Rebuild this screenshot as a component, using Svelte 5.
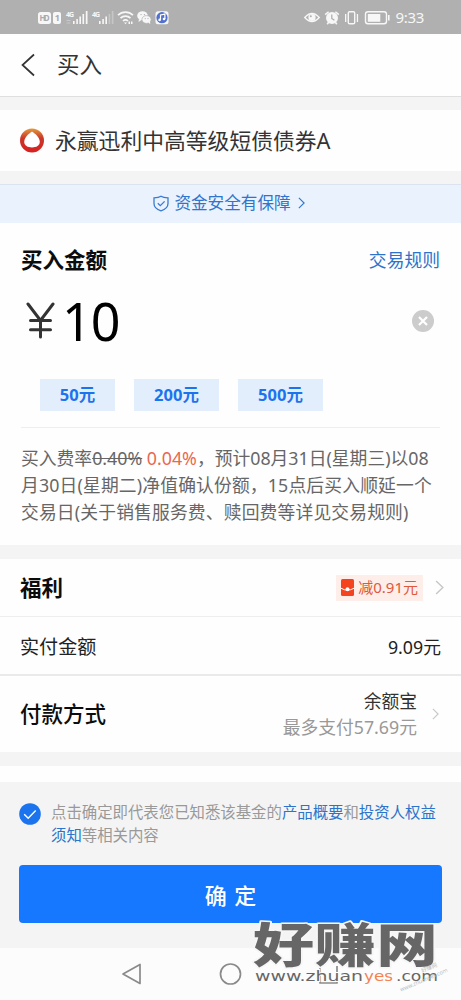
<script>
  let amount = $state('10');
  let agreed = $state(true);

  const presets = [50, 200, 500];
</script>

{#snippet chevron(w, h)}
  <svg class="chevron" width={w} height={h} viewBox="0 0 8 14" preserveAspectRatio="none">
    <path d="M1 1l6 6-6 6" fill="none" stroke="currentColor" stroke-width="1.3" />
  </svg>
{/snippet}

<div class="page">
  <div class="status">
    <svg class="status-left" width="132" height="16" viewBox="0 0 132 16" fill="#f7f7f7">
      <rect x="0" y="3" width="13" height="12" rx="2.5" />
      <text x="1.6" y="12.2" font-size="8" font-weight="700" fill="#aaa" textLength="10">HD</text>
      <rect x="15" y="3" width="8" height="12" rx="2" />
      <text x="16.8" y="12.4" font-size="9" font-weight="700" fill="#aaa">1</text>
      <text x="28" y="7.5" font-size="7" font-weight="700" textLength="8">4G</text>
      <path d="M35 12h1.6v3H35zM38.3 10h1.6v5h-1.6zM41.4 7.5H43V15h-1.6zM44.5 5h1.6v10h-1.6zM47.8 2h1.7v13h-1.7z" />
      <path d="M28.5 11h4v1h-4zM28.5 13.5h4v1h-4z" opacity=".35" />
      <text x="54" y="7.5" font-size="7" font-weight="700" textLength="8">4G</text>
      <path d="M61 12h1.6v3H61zM64.3 10h1.6v5h-1.6zM67.4 7.5H69V15h-1.6z" />
      <path d="M70.6 5h1.6v10h-1.6zM73.8 2h1.7v13h-1.7z" opacity=".3" />
      <g fill="none" stroke="#f7f7f7" stroke-width="1.7">
        <path d="M80 6.2a10.500 10.500 0 0 1 15 0M82.500 9.200a7 7 0 0 1 10 0M85 12a3.600 3.600 0 0 1 5 0" />
      </g>
      <path d="M86 13.500h3l-1.500 1.800zM90.500 12.500h1.500V15h-1.500zM93 12.500h1.500V15H93z" />
      <ellipse cx="104.500" cy="6.800" rx="5.300" ry="4.500" />
      <path d="M101 10l-.5 3 3-2z" />
      <ellipse cx="108.500" cy="10.500" rx="4.600" ry="3.900" stroke="#b0b0b0" stroke-width=".7" />
      <path d="M110 13l2.200 2.300-.2-3z" />
      <g fill="#b0b0b0">
        <circle cx="103" cy="5.600" r=".7" /><circle cx="106.400" cy="5.600" r=".7" />
        <circle cx="107.200" cy="9.600" r=".6" /><circle cx="110" cy="9.600" r=".6" />
      </g>
      <rect x="117.500" y="2.200" width="13" height="13" rx="2.500" />
      <circle cx="124" cy="8.700" r="5.600" fill="#5270cf" />
      <path d="M122.500 10.800V6l4.400-.9v4.800" fill="none" stroke="#fff" stroke-width="1.200" />
      <circle cx="121.600" cy="10.900" r="1.300" fill="#fff" />
      <circle cx="126" cy="10" r="1.300" fill="#fff" />
    </svg>
    <div class="status-right">
      <svg width="87" height="16" viewBox="0 0 87 16" fill="#f7f7f7">
        <path d="M.8 8.500Q8 .500 15.200 8.500 8 16.500.8 8.500z" fill="none" stroke="#f7f7f7" stroke-width="1.500" />
        <circle cx="8" cy="8.500" r="3.600" />
        <circle cx="6.800" cy="7.300" r="1" fill="#b0b0b0" />
        <circle cx="28" cy="9" r="6" />
        <path d="M21.200 5.600l3.400-2.900M34.800 5.600l-3.400-2.900M24.500 13.500l-1.300 1.700M31.500 13.500l1.300 1.700" stroke="#f7f7f7" stroke-width="1.500" />
        <path d="M27.800 5.500v4l2.600 1.800" fill="none" stroke="#aaa" stroke-width="1.200" />
        <rect x="44.300" y="2.800" width="6.400" height="12" rx="1.300" fill="none" stroke="#f7f7f7" stroke-width="1.400" />
        <path d="M41 5h1.300v8H41zM52.800 5h1.300v8h-1.300z" />
        <rect x="61.500" y="2.800" width="21" height="12" rx="2.500" fill="none" stroke="#f7f7f7" stroke-width="1.400" />
        <rect x="63.800" y="5" width="12.500" height="7.700" rx=".5" />
        <path d="M84 6h1.600v5.500H84z" />
      </svg>
      <span class="clock">9:33</span>
    </div>
  </div>

  <header class="titlebar">
    <svg width="14" height="24" viewBox="0 0 14 24">
      <path d="M13 1.500L1.500 12 13 22.500" fill="none" stroke="#333" stroke-width="1.700" />
    </svg>
    <h1>买入</h1>
  </header>

  <section class="fund">
    <svg width="26" height="26" viewBox="0 0 26 26">
      <defs>
        <linearGradient id="ring" x1="0" y1="0" x2="0" y2="1">
          <stop offset="0" stop-color="#e39a3b" />
          <stop offset=".4" stop-color="#c9382a" />
          <stop offset="1" stop-color="#d91f1f" />
        </linearGradient>
      </defs>
      <circle cx="13" cy="12.500" r="12" fill="url(#ring)" />
      <path d="M13 3.500c2.500 1.500 7.800 6 7.800 10.300 0 4-3.500 5.700-7.800 5.700s-7.800-1.700-7.800-5.700C5.200 9.500 10.500 5 13 3.500z" fill="#fff" />
    </svg>
    <span>永赢迅利中高等级短债债券A</span>
  </section>

  <div class="safety">
    <svg width="16" height="17" viewBox="0 0 16 17" fill="none" stroke="#3a7bd0" stroke-width="1.300">
      <path d="M8 1.200c2.200 1.400 4.500 1.500 7 1.600v5.700c0 3.700-3 6-7 7.300-4-1.300-7-3.600-7-7.300V2.800c2.500-.1 4.800-.2 7-1.600z" />
      <path d="M4.800 8.300l2.500 2.400 4.300-4.300" />
    </svg>
    <span>资金安全有保障</span>
    {@render chevron(7, 12)}
  </div>

  <section class="buy">
    <div class="buy-head">
      <h2>买入金额</h2>
      <a class="rules" href="#rules">交易规则</a>
    </div>
    <div class="amount">
      <svg width="30" height="40" viewBox="0 0 30 40" fill="none" stroke="#333" stroke-width="3" stroke-linecap="round">
        <path d="M3 3l12.500 16.500L28 3M15.500 19.500V36M5.500 19.500h20M5.500 28.700h20" />
      </svg>
      <span class="value">{amount}</span>
      <button class="clear" aria-label="清除" onclick={() => (amount = '')}>
        <svg width="22" height="22" viewBox="0 0 22 22">
          <circle cx="11" cy="11" r="11" fill="#ccc" />
          <path d="M7 7l8 8M15 7l-8 8" stroke="#fff" stroke-width="2.200" />
        </svg>
      </button>
    </div>
    <div class="presets">
      {#each presets as n}
        <button class="preset" class:narrow={n < 100} onclick={() => (amount = String(n))}>{n}元</button>
      {/each}
    </div>
    <p class="note">
      <span>买入费率<s>0.40%</s> <em>0.04%</em>，预计08月31日(星期三)以08</span>
      <span class="wide">月30日(星期二)净值确认份额，15点后买入顺延一个</span>
      <span class="wide">交易日(关于销售服务费、赎回费等详见交易规则)</span>
    </p>
  </section>

  <section class="row benefit">
    <h2>福利</h2>
    <div class="coupon">
      <svg width="13" height="17" viewBox="0 0 13 17">
        <rect width="13" height="17" rx="1.500" fill="#f3431f" />
        <path d="M0 9.200q6.500 4 13 0" fill="none" stroke="#fff" stroke-width="1" />
        <circle cx="6.500" cy="10.300" r="2" fill="#fff" />
      </svg>
      <span>减0.91元</span>
    </div>
    {@render chevron(9, 15)}
  </section>
  <section class="row actual">
    <span>实付金额</span>
    <span class="paid">9.09元</span>
  </section>
  <section class="row method">
    <h2>付款方式</h2>
    <div class="source">
      <span>余额宝</span>
      <span class="limit">最多支付57.69元</span>
    </div>
    {@render chevron(7, 12)}
  </section>

  <div class="spacer"></div>

  <footer>
    <div class="terms">
      <button class="check" aria-label="同意" onclick={() => (agreed = !agreed)}>
        <svg width="22" height="22" viewBox="0 0 22 22">
          <circle cx="11" cy="11" r="10.800" fill={agreed ? '#1b73ee' : '#ccc'} />
          <path d="M5.200 11.200l4 4 7.500-7.600" fill="none" stroke="#fff" stroke-width="1.400" />
        </svg>
      </button>
      <p>
        点击确定即代表您已知悉该基金的<a href="#summary">产品概要</a>和<a href="#notice">投资人权益<br />须知</a>等相关内容
      </p>
    </div>
    <button class="confirm">确 定</button>
  </footer>

  <nav class="sysbar">
    <svg width="461" height="52" viewBox="0 0 461 52" fill="none" stroke="#8a8a8a" stroke-width="1.700" stroke-linejoin="round">
      <path d="M140 16.500v19L123 26z" />
      <circle cx="230.500" cy="26" r="10" />
      <path d="M320 18v17h17V18" />
    </svg>
  </nav>

  <svg class="watermark" width="211" height="84" viewBox="0 0 211 84">
    <text class="brand" transform="translate(3 46) scale(1.3 1)" textLength="142">好赚网</text>
    <g class="site">
      <text x="5" y="65" textLength="108" lengthAdjust="spacingAndGlyphs">www.zhuan</text>
      <text x="114" y="65" textLength="29" lengthAdjust="spacingAndGlyphs" class="accent">yes</text>
      <text x="146" y="65" textLength="42" lengthAdjust="spacingAndGlyphs">.com</text>
    </g>
    <g class="stamp" transform="rotate(-23 150 76)">
      <text x="151" y="76">www.zhuanyes.com</text>
      <text x="178" y="67">好赚网</text>
    </g>
  </svg>
</div>

<style>
  :global(body) {
    background: #fefefe;
  }

  .page {
    position: relative;
    width: 461px;
    height: 1000px;
    overflow: hidden;
    background: #f4f4f4;
    color: #333;
    font-family: 'Noto Sans', 'Noto Sans CJK SC', sans-serif;
  }

  .page * {
    box-sizing: border-box;
  }

  svg {
    display: block;
    flex-shrink: 0;
  }

  h1, h2, p {
    margin: 0;
  }

  h2 {
    font-size: 21.5px;
    font-weight: 700;
    line-height: 30px;
    color: #0c0c0c;
  }

  a {
    color: #2b74cc;
    text-decoration: none;
  }

  button {
    padding: 0;
    border: none;
    background: none;
    font-family: inherit;
  }

  .chevron {
    color: #c8c8c8;
  }

  .status {
    display: flex;
    justify-content: space-between;
    height: 34px;
    padding: 9px 37px 0 38px;
    background: #b0b0b0;
  }

  .status-right {
    display: flex;
    gap: 4px;
  }

  .clock {
    font-size: 15px;
    line-height: 17px;
    color: #f7f7f7;
    letter-spacing: -0.3px;
  }

  .titlebar {
    display: flex;
    align-items: center;
    gap: 22px;
    height: 63px;
    padding-left: 21px;
    border-bottom: 1px solid #dfdfdf;
    background: #fefefe;
  }

  h1 {
    font-size: 22.5px;
    font-weight: 400;
    line-height: 32px;
  }

  .fund {
    display: flex;
    align-items: center;
    gap: 10px;
    height: 61px;
    margin: 13px 0;
    padding-left: 19px;
    background: #fefefe;
    font-size: 21.8px;
    line-height: 30px;
  }

  .safety {
    display: flex;
    align-items: center;
    justify-content: center;
    gap: 5px;
    height: 39px;
    padding: 0 3px 2px 0;
    border-top: 1px solid #dbe4ee;
    background: #eaf2fe;
    font-size: 16.6px;
    line-height: 24px;
    color: #2f75cc;
  }

  .safety .chevron {
    margin-left: 2px;
    color: #2f75cc;
  }

  .buy {
    height: 322px;
    padding: 22px 21px 0 21px;
    background: #fefefe;
  }

  .buy-head {
    display: flex;
    align-items: center;
    justify-content: space-between;
    height: 30px;
  }

  .rules {
    font-size: 17.8px;
    line-height: 26px;
    padding-bottom: 1px;
  }

  .amount {
    display: flex;
    align-items: center;
    height: 60px;
    margin-top: 16px;
    padding: 0 6px 0 4px;
  }

  .value {
    margin-left: 7px;
    font-size: 52px;
    line-height: 60px;
    letter-spacing: -1px;
    color: #000;
  }

  .clear {
    margin-left: auto;
  }

  .presets {
    display: flex;
    gap: 19px;
    height: 76px;
    padding: 28px 0 0 19px;
  }

  .preset {
    width: 85px;
    height: 32px;
    background: #e3eefd;
    color: #1b73ee;
    font-size: 16.5px;
    font-weight: 700;
    line-height: 32px;
  }

  .preset.narrow {
    width: 75px;
  }

  .note {
    padding-top: 17px;
    border-top: 1px solid #eee;
    font-size: 17.8px;
    line-height: 27px;
    color: #666;
  }

  .note span {
    display: block;
    white-space: nowrap;
  }

  .note .wide {
    letter-spacing: 0.15px;
  }

  em {
    color: #ea6750;
    font-style: normal;
  }

  .row {
    display: flex;
    align-items: center;
    padding: 0 20px;
    background: #fefefe;
  }

  .benefit {
    height: 58px;
    margin-top: 14px;
    padding-right: 17px;
    border-bottom: 1px solid #eee;
  }

  .coupon {
    display: flex;
    align-items: center;
    gap: 4px;
    height: 26px;
    margin: 0 12px 0 auto;
    padding: 0 5px;
    background: #fdeeea;
    color: #e0593c;
    font-size: 15px;
    line-height: 26px;
  }

  .coupon span {
    padding-bottom: 2px;
  }

  .actual {
    justify-content: space-between;
    height: 59px;
    border-bottom: 2px solid #eaeaea;
    font-size: 19.1px;
    color: #222;
  }

  .paid {
    font-size: 17.8px;
  }

  .method {
    height: 76px;
    padding-right: 22px;
  }

  .method h2 {
    font-weight: 500;
  }

  .source {
    display: flex;
    flex-direction: column;
    align-items: flex-end;
    margin: 0 15px 0 auto;
    font-size: 17.8px;
    line-height: 26px;
  }

  .limit {
    color: #999;
  }

  .spacer {
    height: 16px;
    margin-top: 14px;
    background: #fefefe;
  }

  footer {
    height: 166px;
    padding: 19px 19px 0;
  }

  .terms {
    display: flex;
    gap: 10px;
    height: 64px;
  }

  .check {
    align-self: flex-start;
    margin-top: 2px;
  }

  .terms p {
    font-size: 15.4px;
    line-height: 23px;
    white-space: nowrap;
    color: #999;
  }

  .confirm {
    display: block;
    width: 423px;
    height: 58px;
    border-radius: 4px;
    background: #1677ff;
    color: #fff;
    font-size: 22px;
    font-weight: 500;
    line-height: 60px;
    word-spacing: 2px;
  }

  .sysbar {
    height: 52px;
    background: #fcfcfc;
  }

  .watermark {
    position: absolute;
    left: 250px;
    top: 916px;
    overflow: visible;
  }

  .brand {
    font-family: 'Noto Sans CJK SC', sans-serif;
    font-size: 47px;
    font-weight: 800;
    fill: #666;
    stroke: #f6f6f6;
    stroke-width: 3px;
    stroke-linejoin: round;
    paint-order: stroke;
  }

  .site {
    font-family: 'DejaVu Sans', sans-serif;
    font-size: 14.5px;
    fill: #666;
    stroke: #fcfcfc;
    stroke-width: 2px;
    paint-order: stroke;
  }

  .accent {
    fill: #f5834f;
  }

  .stamp {
    font-family: 'Noto Sans', 'Noto Sans CJK SC', sans-serif;
    font-size: 5.5px;
    fill: #bbb;
  }
</style>
